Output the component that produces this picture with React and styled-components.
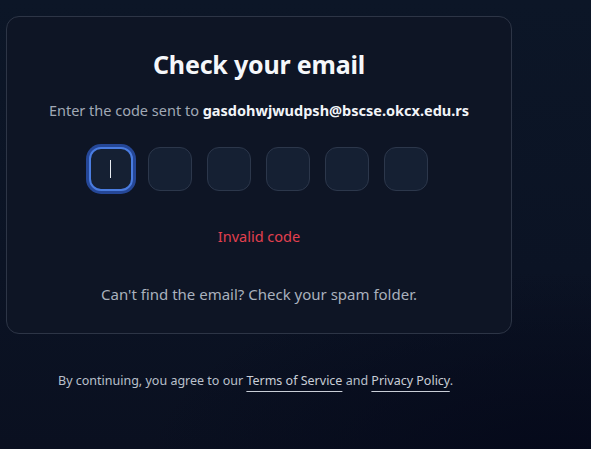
import React from 'react';
import styled, { createGlobalStyle } from 'styled-components';

const GlobalStyle = createGlobalStyle`
  html, body {
    margin: 0;
    padding: 0;
  }
  body {
    width: 591px;
    height: 449px;
    overflow: hidden;
    font-family: "Noto Sans", "Open Sans", sans-serif;
    background:
      radial-gradient(ellipse 420px 200px at 560px 470px, #05091a 0%, rgba(5, 9, 26, 0) 100%),
      linear-gradient(180deg, #0c1627 0%, #0b1324 60%, #0a1020 100%);
  }
`;

export default function App() {
  const slots = [0, 1, 2, 3, 4, 5];
  return (
    <>
      <GlobalStyle />
      <StPage>
        <StCard>
          <StTitle>Check your email</StTitle>
          <StSubtitle>
            Enter the code sent to <StEmail>gasdohwjwudpsh@bscse.okcx.edu.rs</StEmail>
          </StSubtitle>
          <StCodeRow>
            {slots.map((i) => (
              <StCodeBox key={i} $active={i === 0}>
                {i === 0 && <StCaret />}
              </StCodeBox>
            ))}
          </StCodeRow>
          <StError>Invalid code</StError>
          <StHint>Can't find the email? Check your spam folder.</StHint>
        </StCard>
        <StFooter>
          By continuing, you agree to our <StLink>Terms of Service</StLink> and{' '}
          <StLink>Privacy Policy</StLink>.
        </StFooter>
      </StPage>
    </>
  );
}

const StPage = styled.div`
  display: flex;
  flex-direction: column;
  align-items: flex-start;
  padding: 16px 0 0 6px;
`;

const StCard = styled.div`
  box-sizing: border-box;
  width: 506px;
  height: 318px;
  display: flex;
  flex-direction: column;
  align-items: center;
  padding-top: 30px;
  background: #0e1525;
  border: 1px solid #2d3546;
  border-radius: 13px;
`;

const StTitle = styled.h1`
  margin: 0;
  font-size: 25px;
  font-weight: 700;
  line-height: 34px;
  color: #f5f7fa;
  letter-spacing: -0.2px;
`;

const StSubtitle = styled.p`
  margin: 19px 0 0;
  font-size: 14.5px;
  line-height: 20px;
  color: #a1a9b6;
`;

const StEmail = styled.span`
  font-weight: 700;
  color: #f2f4f8;
`;

const StCodeRow = styled.div`
  display: flex;
  gap: 15px;
  margin-top: 27px;
  margin-left: -2px;
`;

const StCodeBox = styled.div`
  box-sizing: border-box;
  width: 44px;
  height: 44px;
  display: flex;
  align-items: center;
  justify-content: center;
  border-radius: 12px;
  background: #152033;
  border: ${({ $active }) => ($active ? '2px solid #4a7ce0' : '1.5px solid #2c374b')};
  box-shadow: ${({ $active }) => ($active ? '0 0 0 3px rgba(46, 88, 190, 0.75)' : 'none')};
`;

const StCaret = styled.span`
  width: 1.5px;
  height: 18px;
  background: #e8ecf2;
`;

const StError = styled.p`
  margin: 35px 0 0;
  font-size: 14.5px;
  line-height: 20px;
  color: #e2404f;
`;

const StHint = styled.p`
  margin: 38px 0 0;
  font-size: 15px;
  line-height: 20px;
  color: #a9b1bd;
`;

const StFooter = styled.p`
  margin: 37px 0 0 52px;
  font-size: 12.5px;
  line-height: 20px;
  color: #b9c0cb;
`;

const StLink = styled.a`
  color: #c9ced7;
  text-decoration: underline;
  text-underline-offset: 6px;
  text-decoration-thickness: 1px;
  cursor: pointer;
`;
